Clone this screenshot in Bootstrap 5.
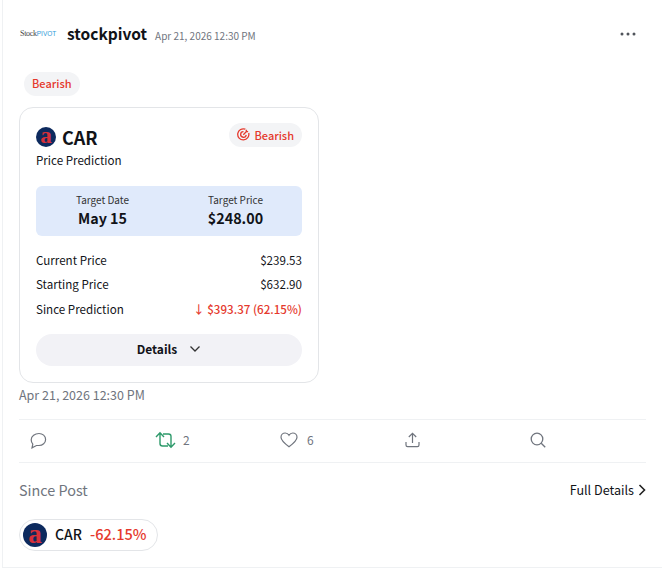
<!DOCTYPE html>
<html lang="en">
<head>
  <meta charset="UTF-8" />
  <meta name="viewport" content="width=device-width, initial-scale=1.0" />
  <title>stockpivot post</title>
  <link href="https://cdn.jsdelivr.net/npm/bootstrap@5.3.0/dist/css/bootstrap.min.css" rel="stylesheet">
  <style>
    body {
      background: #fff;
      font-family: "Noto Sans CJK SC", "Noto Sans", sans-serif;
      color: #111318;
      font-size: 12px;
      line-height: 1.3;
      overflow: hidden;
    }
    .post-wrap {
      margin-left: 2px;
      height: 568px;
      padding: 0 16px;
      border-left: 1px solid #eff1f3;
      border-bottom: 1px solid #eff1f3;
    }
    .post-head { height: 68px; margin-bottom: 4px; }
    .stock-logo { width: 38px; margin-right: 10px; padding-left: 1px; font-family: "Liberation Serif", serif; font-size: 8px; letter-spacing: -.3px; color: #444; white-space: nowrap; }
    .stock-logo span { color: #2f9bd8; font-family: "Liberation Sans", sans-serif; font-size: 6.5px; letter-spacing: 0; }
    .author { font-size: 15.5px; font-weight: 700; padding-bottom: 2px; }
    .stamp-small { font-size: 10px; color: #70757e; margin-left: 8px; padding-top: 2px; }
    .more-dots { margin-right: 10px; }
    .sent-pill { background: #f3f4f6; color: #e5392d; border-radius: 12px; font-size: 11px; font-weight: 500; height: 24px; line-height: 22px; padding: 0 8px; margin-left: 5px; display: inline-block; }
    .top-pill { height: 24px; margin-bottom: 11px; }
    .pred-card { width: 300px; height: 276px; border: 1px solid #e3e5e8; border-radius: 14px; padding: 15px 16px 16px; }
    .ticker { font-size: 18px; font-weight: 700; line-height: 28px; gap: 6px; }
    .brand-dot { background: #0d2a5e; color: #d6303a; border-radius: 50%; font-family: "Liberation Serif", serif; font-weight: 700; flex-shrink: 0; }
    .brand-sm { width: 20px; height: 20px; font-size: 23px; line-height: 20px; }
    .brand-md { width: 24px; height: 24px; font-size: 27px; line-height: 24px; }
    .brand-dot span { margin-top: -3px; }
    .pill-inner { margin: 0; padding-bottom: 1px; display: flex; align-items: center; gap: 4px; }
    .sub-title { font-size: 11.6px; line-height: 17px; margin-top: 1px; }
    .target-box { background: #e0eafb; border-radius: 6px; height: 50px; margin-top: 17px; margin-bottom: 12px; padding-top: 6px; }
    .target-box > div { text-align: center; }
    .t-label { font-size: 10px; line-height: 15px; color: #333; }
    .t-val { font-size: 14.3px; font-weight: 700; line-height: 21px; }
    .price-row { font-size: 11.6px; line-height: 24.3px; }
    .neg { color: #e5392d; }
    .price-row .neg { font-weight: 500; font-size: 11.6px; }
    .details-bar { background: #f2f2f6; border-radius: 16px; height: 32px; margin-top: 13px; padding-bottom: 2px; font-weight: 700; font-size: 12px; gap: 12px; }
    .stamp { font-size: 12.5px; color: #70757e; margin-top: 3px; line-height: 18px; height: 33px; }
    .action-row { border-top: 1px solid #eff1f3; border-bottom: 1px solid #eff1f3; height: 44px; padding-bottom: 2px; }
    .action-cell { flex: 0 0 125px; padding-left: 11px; gap: 7px; color: #70757e; font-size: 12px; }
    .heart-count { margin-left: 2px; }
    .since-row { height: 54px; margin-bottom: 2px; }
    .since-label { font-size: 14.4px; color: #70757e; }
    .full-link { font-size: 12.6px; gap: 4px; }
    .since-pill { width: 139px; height: 32px; border: 1px solid #e3e5e8; border-radius: 16px; padding-left: 3px; font-size: 14px; }
    .since-pill b { font-weight: 500; margin: 0 8px 0 8px; padding-bottom: 1px; }
    .since-pill .neg { font-size: 14.6px; font-weight: 500; padding-bottom: 1px; }
  </style>
</head>
<body>
  <div class="post-wrap">
    <div class="post-head d-flex align-items-center">
      <div class="stock-logo">Stock<span>PIVOT</span></div>
      <div class="author">stockpivot</div>
      <div class="stamp-small">Apr 21, 2026 12:30 PM</div>
      <svg class="more-dots ms-auto" width="16" height="4" viewBox="0 0 16 4"><g fill="#50545b"><circle cx="2" cy="2" r="1.5"/><circle cx="8" cy="2" r="1.5"/><circle cx="14" cy="2" r="1.5"/></g></svg>
    </div>

    <div class="top-pill"><span class="sent-pill">Bearish</span></div>

    <div class="pred-card">
      <div class="d-flex justify-content-between align-items-start">
        <div class="d-flex align-items-center ticker">
          <div class="brand-dot brand-sm d-flex align-items-center justify-content-center"><span>a</span></div>
          CAR
        </div>
        <span class="sent-pill pill-inner">
          <svg width="13" height="13" viewBox="0 0 14 14" fill="none" stroke="#e5392d" stroke-width="1.4"><path d="M12.600 5.400A6 6 0 1 1 9 1.300"/><path d="M9.900 7.400A3 3 0 1 1 7 4"/><path d="M6.800 7.200 11 3M10 2v2h2"/></svg>
          Bearish
        </span>
      </div>
      <div class="sub-title">Price Prediction</div>

      <div class="target-box row g-0">
        <div class="col-6">
          <div class="t-label">Target Date</div>
          <div class="t-val">May 15</div>
        </div>
        <div class="col-6">
          <div class="t-label">Target Price</div>
          <div class="t-val">$248.00</div>
        </div>
      </div>

      <div class="price-row d-flex justify-content-between"><span>Current Price</span><span>$239.53</span></div>
      <div class="price-row d-flex justify-content-between"><span>Starting Price</span><span>$632.90</span></div>
      <div class="price-row d-flex justify-content-between"><span>Since Prediction</span><span class="neg">↓ $393.37 (62.15%)</span></div>

      <div class="details-bar d-flex align-items-center justify-content-center">
        Details
        <svg width="12" height="8" viewBox="0 0 12 8" fill="none" stroke="#333" stroke-width="1.3"><path d="M1.500 1.500 6 6l4.500-4.500"/></svg>
      </div>
    </div>

    <div class="stamp">Apr 21, 2026 12:30 PM</div>

    <div class="action-row d-flex align-items-center">
      <div class="action-cell d-flex align-items-center">
        <svg width="17" height="17" viewBox="0 0 17 17" fill="none" stroke="#70757e" stroke-width="1.2"><path d="M9 1.500c3.600 0 6.600 2.400 6.600 6 0 3.500-3 6-6.600 6H6.500L2 15.800l.8-3.600C1.700 11 1.200 9.500 1.200 7.800 1.200 4 5 1.500 9 1.500Z"/></svg>
      </div>
      <div class="action-cell d-flex align-items-center">
        <svg width="21" height="18" viewBox="0 0 21 18" fill="none" stroke="#2e9a6b" stroke-width="1.4"><path d="M1 6 5 1.800 9 6M5 2v10.500c0 1.500 1 2.500 2.500 2.500H13M20 12l-4 4.200-4-4.200M16 16V5.500C16 4 15 3 13.500 3H8"/></svg>
        <span>2</span>
      </div>
      <div class="action-cell d-flex align-items-center">
        <svg width="18" height="16" viewBox="0 0 18 16" fill="none" stroke="#70757e" stroke-width="1.2"><path d="M9 14.800C5 11.800 1 8.800 1 5.300 1 2.800 3 1 5.200 1 6.800 1 8.200 1.900 9 3.300 9.800 1.900 11.200 1 12.800 1 15 1 17 2.800 17 5.300c0 3.500-4 6.500-8 9.500Z"/></svg>
        <span class="heart-count">6</span>
      </div>
      <div class="action-cell d-flex align-items-center">
        <svg width="15" height="16" viewBox="0 0 15 16" fill="none" stroke="#70757e" stroke-width="1.2"><path d="M7.500 11V1.500M3.800 5 7.500 1.300 11.200 5M1 10v3c0 1 .7 1.600 1.600 1.600h9.800c.9 0 1.600-.6 1.600-1.600v-3"/></svg>
      </div>
      <div class="action-cell d-flex align-items-center">
        <svg width="16" height="16" viewBox="0 0 16 16" fill="none" stroke="#70757e" stroke-width="1.3"><circle cx="7" cy="7" r="5.800"/><path d="m11.200 11.200 4 4"/></svg>
      </div>
    </div>

    <div class="since-row d-flex justify-content-between align-items-center">
      <span class="since-label">Since Post</span>
      <span class="full-link d-flex align-items-center">Full Details
        <svg width="8" height="12" viewBox="0 0 8 12" fill="none" stroke="#222" stroke-width="1.6"><path d="M1.500 1 6.500 6l-5 5"/></svg>
      </span>
    </div>

    <div class="since-pill d-flex align-items-center">
      <div class="brand-dot brand-md d-flex align-items-center justify-content-center"><span>a</span></div>
      <b>CAR</b>
      <span class="neg">-62.15%</span>
    </div>
  </div>
</body>
</html>
